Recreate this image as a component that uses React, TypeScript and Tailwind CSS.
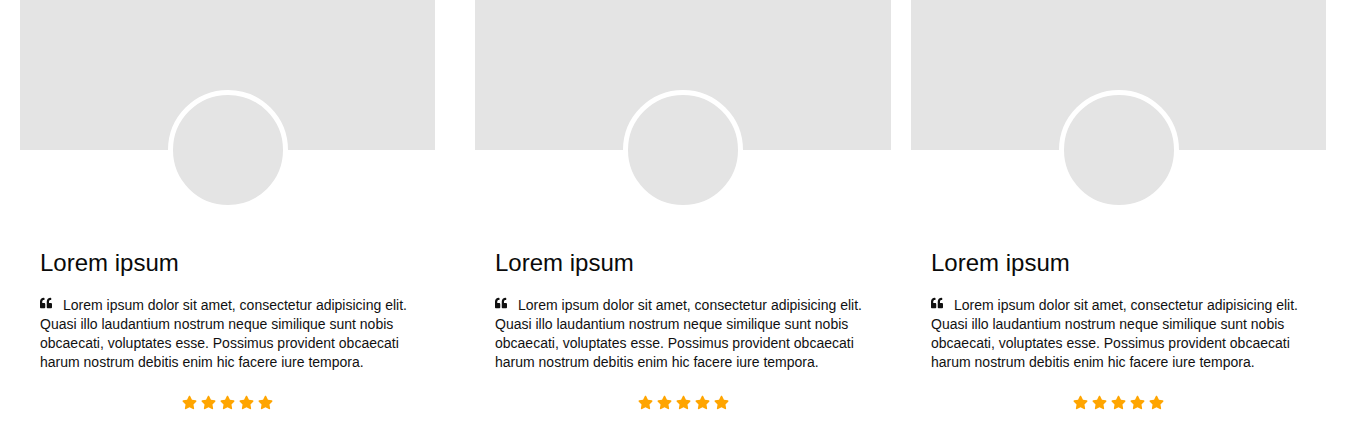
import { FaQuoteLeft, FaStar } from "react-icons/fa";

const QUOTE =
  "Lorem ipsum dolor sit amet, consectetur adipisicing elit. Quasi illo laudantium nostrum neque similique sunt nobis obcaecati, voluptates esse. Possimus provident obcaecati harum nostrum debitis enim hic facere iure tempora.";

/** One testimonial card: banner, overlapping avatar, name, quote, rating. */
function TestimonialCard({ className }: { className: string }) {
  return (
    <div className={`flex flex-col ${className}`}>
      <div className="h-[150px] bg-[#e4e4e4]" />
      <div className="mx-auto -mt-[60px] h-[120px] w-[120px] rounded-full border-[5px] border-white bg-[#e4e4e4]" />

      <div className="px-5">
        <h3 className="mt-[40px] text-[24px] leading-[26px] text-[#0a0a0a]">Lorem ipsum</h3>
        <p className="mt-[20px] text-[14px] leading-[19px] text-[#111]">
          <FaQuoteLeft size={12} className="mr-[11px] inline-block align-[1px] text-[#111]" />
          {QUOTE}
        </p>
      </div>

      <div className="mt-[23px] flex h-[14px] items-center justify-center gap-[4px] text-[#ffa500]">
        {[0, 1, 2, 3, 4].map((i) => (
          <FaStar key={i} size={15} />
        ))}
      </div>
    </div>
  );
}

export default function App() {
  return (
    <div
      className="flex h-[428px] w-[1362px] bg-white pl-[20px]"
      style={{ fontFamily: '"Liberation Sans", Arial, sans-serif' }}
    >
      <TestimonialCard className="w-[415px]" />
      <TestimonialCard className="ml-[40px] w-[416px]" />
      <TestimonialCard className="ml-[20px] w-[415px]" />
    </div>
  );
}
